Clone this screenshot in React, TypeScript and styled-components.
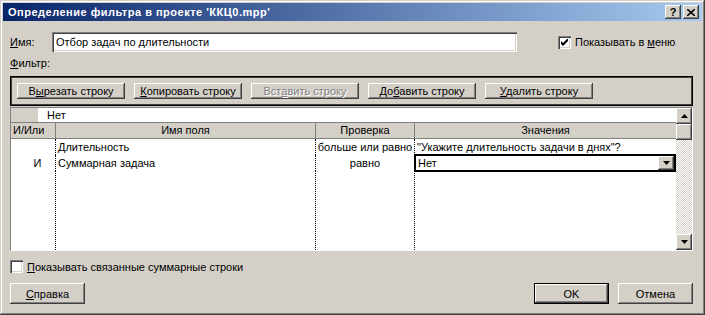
import styled, { createGlobalStyle } from "styled-components";

const GlobalStyle = createGlobalStyle`
  html, body {
    margin: 0;
    padding: 0;
    background: #d4d0c8;
  }
  body {
    font-family: "Liberation Sans", Arial, sans-serif;
    font-size: 11px;
    color: #000;
  }
`;

const raised = `
  box-shadow: inset -1px -1px #404040, inset 1px 1px #fff,
    inset -2px -2px #808080, inset 2px 2px #d4d0c8;
`;

const sunken = `
  box-shadow: inset 1px 1px #808080, inset 2px 2px #404040,
    inset -1px -1px #fff, inset -2px -2px #d4d0c8;
`;

const Window = styled.div`
  width: 705px;
  height: 315px;
  box-sizing: border-box;
  padding: 3px;
  background: #d4d0c8;
  box-shadow: inset -1px -1px #404040, inset 1px 1px #d4d0c8,
    inset -2px -2px #808080, inset 2px 2px #fff;
  display: flex;
  flex-direction: column;
`;

const TitleBar = styled.div`
  height: 18px;
  display: flex;
  align-items: center;
  padding: 0 3px 0 5px;
  background: linear-gradient(90deg, #0a246a, #a6caf0);
  color: #fff;
  font-weight: bold;
  font-size: 11px;
`;

const TitleText = styled.div`
  flex: 1;
  white-space: nowrap;
  letter-spacing: 0.5px;
`;

const TitleButton = styled.div<{ $gap?: boolean }>`
  width: 16px;
  height: 14px;
  box-sizing: border-box;
  background: #d4d0c8;
  ${raised}
  color: #000;
  font-weight: bold;
  font-size: 11px;
  display: flex;
  align-items: center;
  justify-content: center;
  margin-left: ${(p) => (p.$gap ? "2px" : "0")};
`;

const Body = styled.div`
  flex: 1;
  display: flex;
  flex-direction: column;
  padding: 0 9px 0 7px;
`;

const NameRow = styled.div`
  display: flex;
  align-items: center;
  margin-top: 11px;
  height: 20px;
`;

const Label = styled.span<{ $w?: number }>`
  width: ${(p) => (p.$w ? `${p.$w}px` : "auto")};
  white-space: nowrap;
`;

const TextInput = styled.div`
  width: 465px;
  height: 20px;
  box-sizing: border-box;
  background: #fff;
  ${sunken}
  display: flex;
  align-items: center;
  padding-left: 4px;
`;

const CheckRow = styled.label<{ $ml?: number; $mt?: number }>`
  display: flex;
  align-items: center;
  gap: 4px;
  margin-left: ${(p) => p.$ml ?? 0}px;
  margin-top: ${(p) => p.$mt ?? 0}px;
  height: 13px;
  white-space: nowrap;
`;

const CheckBox = styled.span`
  width: 13px;
  height: 13px;
  box-sizing: border-box;
  background: #fff;
  ${sunken}
  display: flex;
  align-items: center;
  justify-content: center;
`;

const FilterLabel = styled.div`
  margin-top: 4px;
  height: 14px;
  line-height: 14px;
`;

const Toolbar = styled.div`
  margin-top: 6px;
  height: 30px;
  box-sizing: border-box;
  border: 1px solid #000;
  box-shadow: inset 1px 1px #404040, inset -1px -1px #404040;
  display: flex;
  align-items: center;
  gap: 9px;
  padding: 0 6px;
`;

const ToolButton = styled.div<{ $disabled?: boolean }>`
  width: 108px;
  height: 16px;
  box-sizing: border-box;
  ${raised}
  display: flex;
  align-items: center;
  justify-content: center;
  color: ${(p) => (p.$disabled ? "#808080" : "#000")};
  text-shadow: ${(p) => (p.$disabled ? "1px 1px #fff" : "none")};
`;

const Grid = styled.div`
  margin-top: 1px;
  height: 144px;
  box-sizing: border-box;
  border-top: 1px solid #808080;
  border-left: 1px solid #808080;
  border-right: 1px solid #fff;
  border-bottom: 1px solid #fff;
  display: flex;
`;

const Table = styled.div`
  flex: 1;
  display: flex;
  flex-direction: column;
  background: #fff;
`;

const EditRow = styled.div`
  height: 15px;
  box-sizing: border-box;
  border-bottom: 1px solid #808080;
  display: flex;
`;

const EditHandle = styled.div`
  width: 27px;
  background: #d4d0c8;
`;

const EditText = styled.div`
  padding-left: 9px;
  line-height: 14px;
`;

const cols = "45px 260px 99px 261px";

const HeaderRow = styled.div`
  height: 16px;
  box-sizing: border-box;
  background: #d4d0c8;
  border-bottom: 1px solid #808080;
  display: grid;
  grid-template-columns: ${cols};
`;

const HeaderCell = styled.div<{ $left?: boolean }>`
  border-right: 1px solid #808080;
  line-height: 15px;
  text-align: ${(p) => (p.$left ? "left" : "center")};
  padding-left: ${(p) => (p.$left ? "2px" : "0")};
  &:last-child {
    border-right: none;
  }
`;

const Rows = styled.div`
  flex: 1;
  display: grid;
  grid-template-columns: ${cols};
  grid-template-rows: 16px 16px 1fr;
`;

const Cell = styled.div<{ $align?: string; $pl?: number }>`
  border-right: 1px dotted #000;
  line-height: 16px;
  white-space: nowrap;
  overflow: visible;
  text-align: ${(p) => p.$align ?? "left"};
  padding-left: ${(p) => p.$pl ?? 2}px;
  &:nth-child(4n) {
    border-right: none;
  }
`;

const Combo = styled.div`
  margin: -1px 0 -2px -1px;
  height: 18px;
  box-sizing: border-box;
  border: 2px solid #000;
  background: #fff;
  display: flex;
  align-items: center;
  padding-left: 2px;
`;

const ComboText = styled.span`
  flex: 1;
  line-height: 14px;
`;

const ArrowButton = styled.div<{ $h?: number }>`
  width: 16px;
  height: ${(p) => p.$h ?? 16}px;
  box-sizing: border-box;
  background: #d4d0c8;
  ${raised}
  display: flex;
  align-items: center;
  justify-content: center;
  flex-shrink: 0;
`;

const ScrollBar = styled.div`
  width: 16px;
  display: flex;
  flex-direction: column;
`;

const Track = styled.div`
  flex: 1;
  background-color: #fff;
  background-image: repeating-conic-gradient(#d4d0c8 0 25%, #fff 0 50%);
  background-size: 2px 2px;
`;

const BottomRow = styled.div`
  margin-top: 10px;
  display: flex;
`;

const DialogButton = styled.div<{ $default?: boolean; $ml?: number }>`
  width: 75px;
  height: 21px;
  box-sizing: border-box;
  ${raised}
  ${(p) => (p.$default ? "border: 1px solid #000;" : "")}
  margin-left: ${(p) => (p.$ml === undefined ? "0" : `${p.$ml}px`)};
  display: flex;
  align-items: center;
  justify-content: center;
`;

const Spacer = styled.div`
  flex: 1;
`;

const U = styled.span`
  text-decoration: underline;
  text-underline-offset: 1px;
`;

const Arrow = ({ up }: { up?: boolean }) => (
  <svg width="7" height="4" viewBox="0 0 7 4">
    <path d={up ? "M3.5 0 L7 4 L0 4 Z" : "M0 0 L7 0 L3.5 4 Z"} fill="#000" />
  </svg>
);

const Check = () => (
  <svg width="7" height="7" viewBox="0 0 7 7">
    <path d="M0 2 V5 L2 7 L7 2 V-1 L2 4 Z" fill="#000" />
  </svg>
);

const Cross = () => (
  <svg width="8" height="7" viewBox="0 0 8 7">
    <path d="M0 0 L8 7 M8 0 L0 7" stroke="#000" strokeWidth="1.6" />
  </svg>
);

const App = () => {
  return (
    <>
      <GlobalStyle />
      <Window>
        <TitleBar>
          <TitleText>Определение фильтра в проекте 'ККЦ0.mpp'</TitleText>
          <TitleButton>?</TitleButton>
          <TitleButton $gap>
            <Cross />
          </TitleButton>
        </TitleBar>
        <Body>
          <NameRow>
            <Label $w={42}>
              <U>И</U>мя:
            </Label>
            <TextInput>Отбор задач по длительности</TextInput>
            <CheckRow $ml={41}>
              <CheckBox>
                <Check />
              </CheckBox>
              <span>
                Показывать в <U>м</U>еню
              </span>
            </CheckRow>
          </NameRow>
          <FilterLabel>
            <U>Ф</U>ильтр:
          </FilterLabel>
          <Toolbar>
            <ToolButton>
              <span>
                В<U>ы</U>резать строку
              </span>
            </ToolButton>
            <ToolButton>
              <span>
                <U>К</U>опировать строку
              </span>
            </ToolButton>
            <ToolButton $disabled>
              <span>
                Вст<U>а</U>вить строку
              </span>
            </ToolButton>
            <ToolButton>
              <span>
                До<U>б</U>авить строку
              </span>
            </ToolButton>
            <ToolButton>
              <span>
                <U>У</U>далить строку
              </span>
            </ToolButton>
          </Toolbar>
          <Grid>
            <Table>
              <EditRow>
                <EditHandle />
                <EditText>Нет</EditText>
              </EditRow>
              <HeaderRow>
                <HeaderCell $left>И/Или</HeaderCell>
                <HeaderCell>Имя поля</HeaderCell>
                <HeaderCell>Проверка</HeaderCell>
                <HeaderCell>Значения</HeaderCell>
              </HeaderRow>
              <Rows>
                <Cell />
                <Cell>Длительность</Cell>
                <Cell $align="center" $pl={0}>
                  больше или равно
                </Cell>
                <Cell>"Укажите длительность задачи в днях"?</Cell>

                <Cell $align="center" $pl={9}>
                  И
                </Cell>
                <Cell>Суммарная задача</Cell>
                <Cell $align="center" $pl={0}>
                  равно
                </Cell>
                <Cell $pl={0}>
                  <Combo>
                    <ComboText>Нет</ComboText>
                    <ArrowButton $h={14}>
                      <Arrow />
                    </ArrowButton>
                  </Combo>
                </Cell>

                <Cell />
                <Cell />
                <Cell />
                <Cell />
              </Rows>
            </Table>
            <ScrollBar>
              <ArrowButton>
                <Arrow up />
              </ArrowButton>
              <ArrowButton />
              <Track />
              <ArrowButton>
                <Arrow />
              </ArrowButton>
            </ScrollBar>
          </Grid>
          <CheckRow $mt={9}>
            <CheckBox />
            <span>
              <U>П</U>оказывать связанные суммарные строки
            </span>
          </CheckRow>
          <BottomRow>
            <DialogButton>
              <span>
                <U>С</U>правка
              </span>
            </DialogButton>
            <Spacer />
            <DialogButton $default>OK</DialogButton>
            <DialogButton $ml={9}>Отмена</DialogButton>
          </BottomRow>
        </Body>
      </Window>
    </>
  );
};

export default App;
